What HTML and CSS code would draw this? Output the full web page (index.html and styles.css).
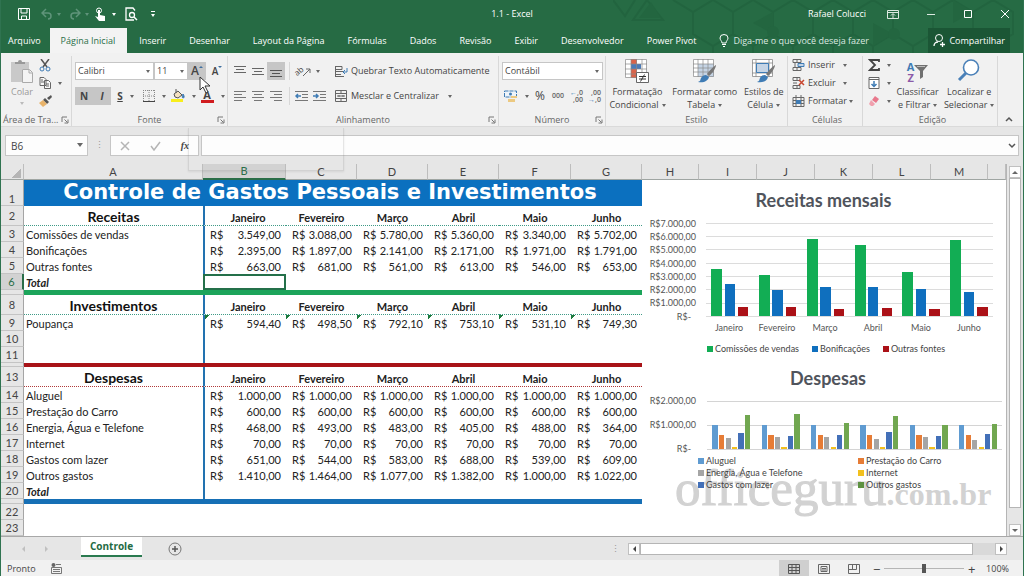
FILE: index.html
```html
<!DOCTYPE html>
<html lang="pt-BR">
<head>
<meta charset="utf-8">
<title>1.1 - Excel</title>
<link rel="stylesheet" href="styles.css">
</head>
<body>
<svg class="defs" aria-hidden="true">
  <symbol id="launch" viewBox="0 0 8 8"><path d="M1 6V1h5M3.500 3.500l3 3M7 3.500V7H3.500" fill="none" stroke="#777"/></symbol>
  <symbol id="brush" viewBox="0 0 20 18"><path d="M19 0c-2 1-7 6-9 9l2 2c3-2 7-8 7-11z" fill="#777"/><path d="M9 10l3 2c-1 4-5 6-11 5 3-1 2-2 3-4s3-3 5-3z" fill="#3f7cb5"/></symbol>
</svg>
<div class="window">
  <header class="top">
    <svg class="pattern" viewBox="0 0 410 53" preserveAspectRatio="xMaxYMin slice" aria-hidden="true">
      <g fill="none" stroke="#1d5a38" stroke-width="2">
        <path d="M0 0l12 16 10-16M20 20l14-20 16 20zM60 0l20 12 20-12M80 12v22l20 12 20-12V12L100 0M120 12l20-12 20 12v22l-20 12-20-12M160 12l20-12 20 12v22l-20 12-20-12M200 12l20-12 20 12v22l-20 12-20-12M240 12l20-12 20 12v22l-20 12-20-12M280 12l20-12 20 12v22l-20 12-20-12M320 12l20-12 20 12v22l-20 12-20-12M360 12l20-12 20 12v22l-20 12-20-12M100 46v10M140 46v10M180 46v10M220 46v10M260 46v10M300 46v10M340 46v10"/>
      </g>
      <g fill="#1f5f3b"><path d="M26 18l12-16 10 16zM140 23l20-11v22zM260 23l20 11-20 12zM340 0l20 12-20 11z"/><circle cx="160" cy="32" r="6"/><circle cx="281" cy="34" r="6"/></g>
    </svg>
    <div class="titlebar">
      <div class="quick">
        <button class="q" aria-label="Salvar"><svg width="12" height="12"><path d="M.5.5h11v11H.5zM3 1v4h6V1M3.500 11V8h5v3" fill="none" stroke="#fff"/></svg></button>
        <button class="q dim" aria-label="Desfazer"><svg width="12" height="12"><path d="M5 1L1 5l4 4M1 5h6c4 0 4 6 0 6" fill="none" stroke="#5f947a" stroke-width="1.500"/></svg><i class="caret"></i></button>
        <button class="q dim" aria-label="Refazer"><svg width="12" height="12"><path d="M7 1l4 4-4 4M11 5H5C1 5 1 11 5 11" fill="none" stroke="#5f947a" stroke-width="1.500"/></svg><i class="caret"></i></button>
        <button class="q touch" aria-label="Modo de toque"><svg width="12" height="14"><circle cx="4" cy="3.500" r="2.500" fill="none" stroke="#fff"/><path d="M3 3h2v5l5 1v5H4L0 9l3 1z" fill="#fff"/></svg><i class="caret"></i></button>
        <button class="q" aria-label="Visualizar impressão"><svg width="13" height="14"><path d="M10 3.500L8 1H1v12h8" fill="none" stroke="#fff" stroke-width="1.300"/><circle cx="7" cy="8" r="2.500" fill="none" stroke="#fff" stroke-width="1.300"/><path d="M9 10l3 3" stroke="#fff" stroke-width="1.500"/></svg></button>
        <button class="q" aria-label="Personalizar"><span class="custom"><i class="caret"></i></span></button>
      </div>
      <div class="doc">1.1 - Excel</div>
      <div class="sys">
        <span>Rafael Colucci</span>
        <button aria-label="Opções da faixa"><svg width="12" height="10"><path d="M.5 1.500h11v8H.5zM.5 3.500h11M6 9V5M4 6.500l2-2 2 2" fill="none" stroke="#dce9e1"/></svg></button>
        <button aria-label="Minimizar"><svg width="10" height="10"><path d="M1 5.500h8" stroke="#dce9e1"/></svg></button>
        <button aria-label="Maximizar"><svg width="10" height="10"><path d="M1.500 1.500h7v7h-7z" fill="none" stroke="#fff"/></svg></button>
        <button aria-label="Fechar"><svg width="10" height="10"><path d="M1 1l8 8M9 1L1 9" stroke="#fff"/></svg></button>
      </div>
    </div>
    <nav class="tabs">
      <button>Arquivo</button><button class="on">Página Inicial</button><button>Inserir</button><button>Desenhar</button><button>Layout da Página</button><button>Fórmulas</button><button>Dados</button><button>Revisão</button><button>Exibir</button><button>Desenvolvedor</button><button>Power Pivot</button>
      <button class="tell"><svg width="10" height="13"><path d="M3 9C3 7 1 6 1 4a4 3.500 0 0 1 8 0c0 2-2 3-2 5zM3 10.500h4M4 12.500h2" fill="none" stroke="#fff"/></svg>Diga-me o que você deseja fazer</button>
      <button class="share"><svg width="12" height="13"><circle cx="6" cy="4" r="3.500" fill="none" stroke="#fff"/><path d="M1 12c0-3 2-4 4-4M7 10.500h5M9.500 8v5" fill="none" stroke="#fff" stroke-width="1.300"/></svg>Compartilhar</button>
    </nav>
  </header>

  <section class="ribbon">
    <div class="group g-clip">
      <div class="body">
        <button class="paste"><svg width="25" height="25"><path d="M1 3h18v7h-7v13H1z" fill="#c9c9c9"/><path d="M5 5V3h3a2 2 0 0 1 4 0h3v2z" fill="#999"/><path d="M12.500 10.500h7l3 3v10h-10zM19 11v3h3" fill="#f4f4f4" stroke="#aaa"/></svg><span>Colar</span><i class="caret"></i></button>
        <div class="stack">
          <button aria-label="Recortar"><svg width="12" height="13"><path d="M2 0l6 8M10 0L4 8" stroke="#555" stroke-width="1.500"/><circle cx="3" cy="10" r="2" fill="none" stroke="#3f7cb5"/><circle cx="9" cy="10" r="2" fill="none" stroke="#3f7cb5"/></svg></button>
          <button aria-label="Copiar"><svg width="13" height="12"><path d="M1 .5h4l2 2v6H1zM5.500 3.500h4l2 2v6h-6zM2 3h2M2 5h3M7 7h3M7 9h3" fill="#f8f8f8" stroke="#666"/></svg><i class="caret"></i></button>
          <button aria-label="Pincel de formatação"><svg width="13" height="12"><path d="M8 3l4-3 1 2-3 3z" fill="#555"/><path d="M6 3l4 4-2 2-4-4z" fill="#555"/><path d="M4 5l4 4-4 3-4-4z" fill="#e8b36a"/></svg></button>
        </div>
      </div>
      <div class="name">Área de Tra...<svg width="8" height="8"><use href="#launch"/></svg></div>
    </div>

    <div class="group g-font">
      <div class="rows">
        <div class="row">
          <span class="combo c1"><select aria-label="Fonte"><option>Calibri</option></select></span>
          <span class="combo c2"><select aria-label="Tamanho"><option>11</option></select></span>
          <button class="b18 sel" aria-label="Aumentar fonte"><span class="biga">A</span><i class="up"></i></button>
          <button class="b18" aria-label="Diminuir fonte"><span class="smalla">A</span><i class="dn"></i></button>
        </div>
        <div class="row">
          <button class="b18 sel"><b>N</b></button>
          <button class="b18 sel"><em>I</em></button>
          <button class="b28"><u>S</u><i class="caret"></i></button>
          <button class="b28" aria-label="Bordas"><svg width="12" height="12"><path d="M.5 0v11M11.500 0v11M0 .5h12M6 0v11M0 6h12" stroke="#888" stroke-dasharray="1 1"/><path d="M0 11.500h12" stroke="#444"/></svg><i class="caret"></i></button>
          <button class="b28" aria-label="Preenchimento"><svg width="14" height="14"><path d="M3 5l4-3 4 4-4 3-3-1zM5 4V0" fill="#f4e0c0" stroke="#555"/><path d="M12 5c2 3 1 4 0 4s-1-2 0-4z" fill="#3f7cb5" stroke="#3f7cb5"/><path d="M0 10h12v3H0z" fill="#f8ee1c"/></svg><i class="caret"></i></button>
          <button class="b28" aria-label="Cor da fonte"><span class="fcolor">A</span><i class="caret"></i></button>
        </div>
      </div>
      <div class="name">Fonte<svg width="8" height="8"><use href="#launch"/></svg></div>
    </div>

    <div class="group g-align">
      <div class="rows">
        <div class="row">
          <button class="b18" aria-label="Alinhar acima"><svg width="12" height="12"><path d="M0 1.500h12M2 4.500h8M0 7.500h12" stroke="#666"/></svg></button>
          <button class="b18" aria-label="Alinhar no meio"><svg width="12" height="12"><path d="M0 3.500h12M2 6.500h8M0 9.500h12" stroke="#666"/></svg></button>
          <button class="b18 sel" aria-label="Alinhar abaixo"><svg width="12" height="12"><path d="M0 5.500h12M2 8.500h8M0 11.500h12" stroke="#555"/></svg></button>
          <span class="split"></span>
          <button class="b28 wide" aria-label="Orientação"><span class="orient">ab</span><svg width="8" height="12"><path d="M0 11l7-7M3 4h4v4" fill="none" stroke="#666"/></svg><i class="caret"></i></button>
          <button class="txt"><svg width="13" height="13"><path d="M.5 1v11M1 1.500h6v3H1M1 6.500h8M1 9.500h5M1 11.500h8" fill="none" stroke="#666"/><path d="M12 3v4H8M10 5L8 7l2 2" fill="none" stroke="#3f7cb5"/></svg>Quebrar Texto Automaticamente</button>
        </div>
        <div class="row">
          <button class="b18" aria-label="Esquerda"><svg width="12" height="12"><path d="M0 1.500h12M0 4.500h8M0 7.500h12M0 10.500h8" stroke="#777"/></svg></button>
          <button class="b18" aria-label="Centro"><svg width="12" height="12"><path d="M0 1.500h12M2 4.500h8M0 7.500h12M2 10.500h8" stroke="#777"/></svg></button>
          <button class="b18" aria-label="Direita"><svg width="12" height="12"><path d="M0 1.500h12M4 4.500h8M0 7.500h12M4 10.500h8" stroke="#777"/></svg></button>
          <span class="split"></span>
          <button class="b18" aria-label="Diminuir recuo"><svg width="14" height="12"><path d="M0 1.500h13M7 4.500h6M7 7.500h6M0 10.500h13" stroke="#777"/><path d="M6 6H1M3 4L1 6l2 2" fill="none" stroke="#3f7cb5" stroke-width="1.500"/></svg></button>
          <button class="b18" aria-label="Aumentar recuo"><svg width="14" height="12"><path d="M0 1.500h13M7 4.500h6M7 7.500h6M0 10.500h13" stroke="#777"/><path d="M0 6h5M3 4l2 2-2 2" fill="none" stroke="#3f7cb5" stroke-width="1.500"/></svg></button>
          <button class="txt merge"><svg width="13" height="13"><path d="M.5.5h11v11H.5zM0 3.500h12M0 8.500h12M6 0v3M6 9v3M2 6h8M4 5v2M8 5v2" fill="none" stroke="#666"/></svg>Mesclar e Centralizar<i class="caret"></i></button>
        </div>
      </div>
      <div class="name">Alinhamento<svg width="8" height="8"><use href="#launch"/></svg></div>
    </div>

    <div class="group g-num">
      <div class="rows">
        <div class="row"><span class="combo c3"><select aria-label="Formato de número"><option>Contábil</option></select></span></div>
        <div class="row">
          <button class="b28" aria-label="Formato contábil"><svg width="14" height="13"><path d="M.5 1h12v6H.5z" fill="#eef4fa" stroke="#3f7cb5" stroke-dasharray="4 1"/><circle cx="6.500" cy="4" r="1.500" fill="#3f7cb5"/><path d="M7 6h6v2H7zM4 9h7v3H4z" fill="#ecc981"/></svg><i class="caret"></i></button>
          <button class="b18 pct">%</button>
          <button class="b18 zeros">000</button>
          <button class="b18 dec" aria-label="Aumentar casas"><span><i>←</i>,0</span><span>,00</span></button>
          <button class="b18 dec" aria-label="Diminuir casas"><span>,00</span><span><i>→</i>,0</span></button>
        </div>
      </div>
      <div class="name">Número<svg width="8" height="8"><use href="#launch"/></svg></div>
    </div>

    <div class="group g-style">
      <div class="body">
        <button class="big"><svg width="24" height="25"><path d="M.5.5h21v18H.5z" fill="#fff"/><path d="M6 0h6v5H6zM6 15h5v4H6z" fill="#d9634a"/><path d="M6 5h10v5H6z" fill="#4a7ab8"/><path d="M6 10h6v5H6z" fill="#d9634a"/><path d="M.5.5h21v18H.5zM6 0v19M11.500 0v19M17 0v19M0 5h22M0 10h22M0 15h22" fill="none" stroke="#8a8a8a" stroke-width=".7"/><path d="M11.500 13.500h12v10h-12z" fill="#fff" stroke="#666"/><path d="M14 17.500h7M14 20h7M19.500 15.500l-4 7" stroke="#333"/></svg><span>Formatação<br>Condicional<i class="caret"></i></span></button>
        <button class="big"><svg width="24" height="25"><path d="M.5.500h20v17H.5z" fill="#fff"/><path d="M5 5h16v13H5z" fill="#c5d4e5"/><path d="M.5.5h20v17H.5zM5 0v18M10 0v18M15 0v18M0 5h21M0 9h21M0 13h21" fill="none" stroke="#8a8a8a" stroke-width=".7"/><use href="#brush" x="4" y="6" width="20" height="18"/></svg><span>Formatar como<br>Tabela<i class="caret"></i></span></button>
        <button class="big"><svg width="24" height="25"><path d="M.5.5h20v17H.5zM4 0v18M17 0v18M0 4h21M0 14h21" fill="#fff" stroke="#8a8a8a" stroke-width=".8"/><path d="M4.500 4.500h12v9h-12z" fill="#c5d4e5" stroke="#3f7cb5"/><use href="#brush" x="4" y="6" width="20" height="18"/></svg><span>Estilos de<br>Célula<i class="caret"></i></span></button>
      </div>
      <div class="name">Estilo</div>
    </div>

    <div class="group g-cells">
      <div class="stack">
        <button><svg width="13" height="13"><path d="M1 .5h8v3H1zM5 .5v3M1 8.500h8v3H1zM5 8.500v3M3 4v4" fill="none" stroke="#666"/><path d="M6 4.500h6v3H6z" fill="#c5d4e5" stroke="#3f7cb5"/></svg><span>Inserir</span><i class="caret"></i></button>
        <button><svg width="13" height="13"><path d="M1 .5h7v3H1zM5 .5v3M1 8.500h7v3H1zM5 8.500v3M1 6h4" fill="none" stroke="#666"/><path d="M7 3l5 5M12 3L7 8" stroke="#c8452f" stroke-width="1.500"/></svg><span>Excluir</span><i class="caret"></i></button>
        <button><svg width="13" height="13"><path d="M1 2.500h11v9H1zM1 5.500h11M1 8.500h11M4 0v12M9 0v12" fill="none" stroke="#666"/><path d="M4 5h5v4H4z" fill="#3f7cb5"/></svg><span>Formatar</span><i class="caret"></i></button>
      </div>
      <div class="name">Células</div>
    </div>

    <div class="group g-edit">
      <div class="body">
        <div class="stack">
          <button aria-label="Soma"><svg width="13" height="12"><path d="M11 3V1H2l5 5-5 5h9V9" fill="none" stroke="#444" stroke-width="1.800"/></svg><i class="caret"></i></button>
          <button aria-label="Preencher"><svg width="13" height="12"><path d="M1 .5h10v11H1zM1 2.500h10" fill="#fff" stroke="#666"/><path d="M6 4v5M3.500 7L6 9.500 8.500 7" fill="none" stroke="#3f7cb5" stroke-width="1.500"/></svg><i class="caret"></i></button>
          <button aria-label="Limpar"><svg width="13" height="12"><path d="M7 1l4 3-3 4-4-3z" fill="#e8788c"/><path d="M3 5l4 4-2 2H3L1 9z" fill="#f0a0ae"/></svg><i class="caret"></i></button>
        </div>
        <button class="big"><span class="az"><span class="letters"><span>A</span><span>Z</span></span><svg width="14" height="14"><path d="M0 0h14L9 6v6l-3 2V6z" fill="#707070"/><path d="M3 1.500h8" stroke="#bbb"/></svg></span><span>Classificar<br>e Filtrar<i class="caret"></i></span></button>
        <button class="big"><svg width="24" height="25"><circle cx="14" cy="8.500" r="7.500" fill="#fff" stroke="#4a80b8" stroke-width="1.600"/><path d="M9 14l-7 7" stroke="#4a80b8" stroke-width="3"/></svg><span>Localizar e<br>Selecionar<i class="caret"></i></span></button>
      </div>
      <div class="name">Edição</div>
    </div>
    <button class="collapse" aria-label="Recolher"><svg width="8" height="6"><path d="M1 5l3-3 3 3" fill="none" stroke="#555" stroke-width="1.500"/></svg></button>
    <svg class="cursor" width="13" height="19"><path d="M1 1v13l3-3 3 6 2-1-3-6h5z" fill="#fff" stroke="#333"/></svg>
  </section>

  <section class="formula">
    <span class="combo namebox"><input type="text" value="B6" aria-label="Caixa de nome"></span>
    <span class="dots">⋮</span>
    <div class="fx">
      <button aria-label="Cancelar"><svg width="10" height="10"><path d="M1 1l8 8M9 1L1 9" stroke="#b5b5b5" stroke-width="1.500"/></svg></button>
      <button aria-label="Inserir"><svg width="11" height="10"><path d="M1 5l3 4 6-8" fill="none" stroke="#b5b5b5" stroke-width="1.500"/></svg></button>
      <button class="fn">fx</button>
    </div>
    <div class="finput"><input type="text" aria-label="Fórmula"><svg width="8" height="6"><path d="M1 1l3 3 3-3" fill="none" stroke="#555" stroke-width="1.500"/></svg></div>
    <div class="ghost"></div>
  </section>

  <main class="work">
    <table class="sheet">
      <colgroup><col class="w-rh"><col class="w-a"><col class="w-b"><col class="w-n"><col class="w-n"><col class="w-n"><col class="w-f"><col class="w-n"><col class="w-h"><col class="w-i"><col class="w-i"><col class="w-i"><col class="w-i"><col class="w-h"><col></colgroup>
      <thead>
        <tr><th class="corner"></th><th>A</th><th class="active">B</th><th>C</th><th>D</th><th>E</th><th>F</th><th>G</th><th>H</th><th>I</th><th>J</th><th>K</th><th>L</th><th>M</th><th></th></tr>
      </thead>
      <tbody>
        <tr class="r1"><th>1</th><td colspan="7" class="banner">Controle de Gastos Pessoais e Investimentos</td>
          <td colspan="7" rowspan="23" class="charts">
            <div class="canvas">
            <div class="mark"><span>officeguru</span><small>.com.br</small></div>
            <figure>
              <h2 class="h-one">Receitas mensais</h2>
              <svg class="plot" viewBox="0 0 364 120">
                <path d="M64 7.500h287M64 20.500h287M64 33.500h287M64 47.500h287M64 60.500h287M64 73.500h287M64 87.500h287M64 100.500h287" stroke="#dcdcdc"/>
                <g class="axis" text-anchor="end"><text x="54" y="11">R$7.000,00</text><text x="54" y="24">R$6.000,00</text><text x="54" y="37">R$5.000,00</text><text x="54" y="51">R$4.000,00</text><text x="54" y="64">R$3.000,00</text><text x="54" y="77">R$2.000,00</text><text x="54" y="90">R$1.000,00</text><text x="49" y="104">R$-</text></g>
                <path fill="#12ad54" d="M69 100V53h11v47zM117 100V59h11v41zM165 100V23h11v77zM213 100V29h11v71zM260 100V56h11v44zM308 100V24h11v76z"/>
                <path fill="#0f6fbe" d="M83 100V68h10v32zM130 100V74h11v26zM178 100V71h11v29zM226 100V71h10v29zM274 100V73h10v27zM322 100V76h10v24z"/>
                <path fill="#ab1117" d="M96 100v-9h10v9zM144 100v-9h10v9zM192 100v-7h10v7zM240 100v-8h10v8zM287 100v-7h11v7zM335 100v-9h11v9z"/>
                <g class="axis" text-anchor="middle"><text x="87" y="115">Janeiro</text><text x="135" y="115">Fevereiro</text><text x="183" y="115">Março</text><text x="231" y="115">Abril</text><text x="279" y="115">Maio</text><text x="327" y="115">Junho</text></g>
              </svg>
              <ul class="legend one"><li class="k1">Comissões de vendas</li><li class="k2">Bonificações</li><li class="k3">Outras fontes</li></ul>
            </figure>
            <figure>
              <h2 class="h-two">Despesas</h2>
              <svg class="plot" viewBox="0 0 364 60">
                <path d="M65 6.500h295M65 30.500h295M65 54.500h295" stroke="#d4d4d4"/>
                <g class="axis" text-anchor="end"><text x="54" y="9">R$2.000,00</text><text x="54" y="33">R$1.000,00</text><text x="49" y="57">R$-</text></g>
                <path fill="#5f9bd1" d="M70 54V30h6v24zM120 54V30h5v24zM169 54V30h5v24zM218 54V30h6v24zM268 54V30h5v24zM317 54V30h5v24z"/>
                <path fill="#e67c36" d="M77 54V40h5v14zM126 54V40h6v14zM176 54V40h5v14zM225 54V40h5v14zM274 54V40h6v14zM324 54V40h5v14z"/>
                <path fill="#a5a5a5" d="M84 54V43h5v11zM133 54V42h5v12zM182 54V42h5v12zM232 54V44h5v10zM281 54V42h5v12zM330 54V45h5v9z"/>
                <path fill="#f2c01e" d="M90 54v-2h5v2zM139 54v-2h6v2zM189 54v-2h5v2zM238 54v-2h5v2zM287 54v-2h6v2zM337 54v-2h5v2z"/>
                <path fill="#4370b8" d="M96 54V38h6v16zM146 54V41h5v13zM195 54V40h5v14zM244 54V37h6v17zM294 54V41h5v13zM343 54V39h5v15z"/>
                <path fill="#71a750" d="M103 54V20h5v34zM152 54V19h6v35zM202 54V28h5v26zM251 54V21h5v33zM300 54V30h6v24zM350 54V29h5v25z"/>
              </svg>
              <ul class="legend two"><li class="d1">Aluguel</li><li class="d2">Prestação do Carro</li><li class="d3">Energia, Água e Telefone</li><li class="d4">Internet</li><li class="d5">Gastos com lazer</li><li class="d6">Outros gastos</li></ul>
            </figure>
            </div>
          </td></tr>
        <tr class="head"><th>2</th><td class="sec">Receitas</td><td>Janeiro</td><td>Fevereiro</td><td>Março</td><td>Abril</td><td>Maio</td><td>Junho</td></tr>
        <tr><th>3</th><td>Comissões de vendas</td><td><i>R$</i>3.549,00</td><td><i>R$</i>3.088,00</td><td><i>R$</i>5.780,00</td><td><i>R$</i>5.360,00</td><td><i>R$</i>3.340,00</td><td><i>R$</i>5.702,00</td></tr>
        <tr><th>4</th><td>Bonificações</td><td><i>R$</i>2.395,00</td><td><i>R$</i>1.897,00</td><td><i>R$</i>2.141,00</td><td><i>R$</i>2.171,00</td><td><i>R$</i>1.971,00</td><td><i>R$</i>1.791,00</td></tr>
        <tr><th>5</th><td>Outras fontes</td><td><i>R$</i>663,00</td><td><i>R$</i>681,00</td><td><i>R$</i>561,00</td><td><i>R$</i>613,00</td><td><i>R$</i>546,00</td><td><i>R$</i>653,00</td></tr>
        <tr class="total current"><th>6</th><td>Total</td><td class="cell-on"></td><td></td><td></td><td></td><td></td><td></td></tr>
        <tr class="bar green"><th></th><td colspan="7"></td></tr>
        <tr class="head"><th>8</th><td class="sec">Investimentos</td><td>Janeiro</td><td>Fevereiro</td><td>Março</td><td>Abril</td><td>Maio</td><td>Junho</td></tr>
        <tr class="flag"><th>9</th><td>Poupança</td><td><i>R$</i>594,40</td><td><i>R$</i>498,50</td><td><i>R$</i>792,10</td><td><i>R$</i>753,10</td><td><i>R$</i>531,10</td><td><i>R$</i>749,30</td></tr>
        <tr><th>10</th><td></td><td></td><td></td><td></td><td></td><td></td><td></td></tr>
        <tr><th>11</th><td></td><td></td><td></td><td></td><td></td><td></td><td></td></tr>
        <tr class="bar red"><th></th><td colspan="7"></td></tr>
        <tr class="head warm"><th>13</th><td class="sec">Despesas</td><td>Janeiro</td><td>Fevereiro</td><td>Março</td><td>Abril</td><td>Maio</td><td>Junho</td></tr>
        <tr><th>14</th><td>Aluguel</td><td><i>R$</i>1.000,00</td><td><i>R$</i>1.000,00</td><td><i>R$</i>1.000,00</td><td><i>R$</i>1.000,00</td><td><i>R$</i>1.000,00</td><td><i>R$</i>1.000,00</td></tr>
        <tr><th>15</th><td>Prestação do Carro</td><td><i>R$</i>600,00</td><td><i>R$</i>600,00</td><td><i>R$</i>600,00</td><td><i>R$</i>600,00</td><td><i>R$</i>600,00</td><td><i>R$</i>600,00</td></tr>
        <tr><th>16</th><td>Energia, Água e Telefone</td><td><i>R$</i>468,00</td><td><i>R$</i>493,00</td><td><i>R$</i>483,00</td><td><i>R$</i>405,00</td><td><i>R$</i>488,00</td><td><i>R$</i>364,00</td></tr>
        <tr><th>17</th><td>Internet</td><td><i>R$</i>70,00</td><td><i>R$</i>70,00</td><td><i>R$</i>70,00</td><td><i>R$</i>70,00</td><td><i>R$</i>70,00</td><td><i>R$</i>70,00</td></tr>
        <tr><th>18</th><td>Gastos com lazer</td><td><i>R$</i>651,00</td><td><i>R$</i>544,00</td><td><i>R$</i>583,00</td><td><i>R$</i>688,00</td><td><i>R$</i>539,00</td><td><i>R$</i>609,00</td></tr>
        <tr><th>19</th><td>Outros gastos</td><td><i>R$</i>1.410,00</td><td><i>R$</i>1.464,00</td><td><i>R$</i>1.077,00</td><td><i>R$</i>1.382,00</td><td><i>R$</i>1.000,00</td><td><i>R$</i>1.022,00</td></tr>
        <tr class="total"><th>20</th><td>Total</td><td></td><td></td><td></td><td></td><td></td><td></td></tr>
        <tr class="bar blue"><th></th><td colspan="7"></td></tr>
        <tr class="plain"><th>22</th><td colspan="7"></td></tr>
        <tr class="plain"><th>23</th><td colspan="7"></td></tr>
      </tbody>
    </table>
    <div class="vscroll"><button aria-label="Para cima"><i class="tri-u"></i></button><div class="track"></div><button aria-label="Para baixo"><i class="tri-d"></i></button></div>
  </main>

  <section class="sheetbar">
    <div class="navs"><i class="tri-l"></i><i class="tri-r"></i></div>
    <button class="stab">Controle</button>
    <button class="add" aria-label="Nova planilha"><svg width="14" height="14"><circle cx="7" cy="7" r="6" fill="none" stroke="#777"/><path d="M4 7h6M7 4v6" stroke="#555" stroke-width="1.500"/></svg></button>
    <span class="dots">⋮</span>
    <div class="hscroll"><button aria-label="Esquerda"><i class="tri-l dark"></i></button><div class="thumb"></div><button aria-label="Direita"><i class="tri-r dark"></i></button></div>
  </section>

  <footer class="status">
    <span class="ready">Pronto</span>
    <svg width="11" height="11"><circle cx="2.500" cy="2" r="2" fill="#666"/><path d="M5 1.500h5M.5 4.500h10v6H.5zM2 6.500h7M2 8.500h7" fill="none" stroke="#777"/></svg>
    <div class="views">
      <button class="von" aria-label="Normal"><svg width="12" height="10"><path d="M.5.5h11v9H.5zM4 0v10M8 0v10M0 3.500h12M0 6.500h12" fill="none" stroke="#555"/></svg></button>
      <button aria-label="Layout da página"><svg width="12" height="10"><path d="M.5.5h11v9H.5zM3 2.500h6v5H3zM4 4.500h4M4 6h4" fill="none" stroke="#666"/></svg></button>
      <button aria-label="Quebras de página"><svg width="12" height="10"><path d="M.5.5h11v9H.5zM4.500 0v5.500M8.500 0v5.500H1" fill="none" stroke="#666"/></svg></button>
    </div>
    <div class="zoom"><button aria-label="Menos zoom">−</button><input type="range" min="0" max="100" value="50" aria-label="Zoom"><button aria-label="Mais zoom">+</button></div>
    <span class="pc">100%</span>
  </footer>
</div>
</body>
</html>
```
FILE: styles.css
```css
* { box-sizing: border-box; }
body { margin: 0; background: #e6e6e6; font: 9px/12px "Open Sans", "Noto Sans", sans-serif; color: #444; }
button { font: inherit; color: inherit; background: none; border: 0; padding: 0; margin: 0; display: flex; align-items: center; white-space: nowrap; }
svg { display: block; flex: none; }
i { font-style: normal; }
.defs { position: absolute; width: 0; height: 0; }
.window { min-height: 100vh; display: flex; flex-direction: column; border: solid #2f7350; border-width: 0 1px 1px; }

.caret { flex: none; border: solid transparent; border-width: 3px 2px 0; border-top-color: #666; width: 0; height: 0; }

/* title bar and tabs */
.top { background: #266b44; color: #fff; position: relative; }
.pattern { position: absolute; right: 0; top: 0; width: 410px; height: 53px; opacity: .4; }
.titlebar { height: 28px; display: grid; grid-template-columns: 1fr auto 1fr; align-items: center; position: relative; }
.quick { display: flex; align-items: center; padding-left: 17px; gap: 11px; }
.q { gap: 5px; }
.q .caret { border-top-color: #fff; }
.q.dim .caret { border-top-color: #5f947a; }
.q.dim { gap: 4px; }
.q.dim + .dim { margin-left: -3px; }
.touch { margin-left: -5px; margin-right: -2px; }
.custom { border-top: 1px solid #fff; padding-top: 2px; margin-left: 2px; }
.custom .caret { display: block; }
.sys { display: flex; align-items: center; justify-content: flex-end; padding-right: 13px; gap: 27px; }
.sys span { margin-right: -6px; }
.tabs { height: 25px; display: flex; gap: 1px; position: relative; padding-right: 13px; }
.tabs button { padding: 0 11px; }
.tabs button:first-child { padding: 0 8px 0 7px; }
.tabs .on { background: #f3f3f3; color: #2a6e48; padding: 0 12px 0 11px; }
.tabs .tell { color: #dce9e1; gap: 4px; }
.tabs .share { margin-left: auto; background: #1b5635; padding: 0 5px; gap: 4px; }

/* ribbon */
.ribbon { display: flex; background: #f1f1f1; height: 74px; border-bottom: 1px solid #dadada; position: relative; padding-top: 3px; }
.group { border-right: 1px solid #d8d8d8; display: flex; flex-direction: column; height: 70px; flex: none; }
.group .name { margin-top: auto; height: 12px; text-align: center; color: #666; position: relative; white-space: nowrap; }
.group .name svg { position: absolute; right: 2px; top: 2px; }
.g-clip { width: 71px; }
.g-clip .name { text-align: left; padding-left: 2px; }
.g-font { width: 156px; }
.g-align { width: 271px; }
.g-num { width: 107px; }
.g-style { width: 182px; }
.g-cells { width: 75px; padding-left: 4px; }
.g-edit { width: 135px; padding-left: 5px; }
.body { display: flex; }
.rows { display: flex; flex-direction: column; gap: 7px; padding: 6px 0 0 3px; }
.row { display: flex; align-items: center; height: 18px; }
.paste { flex-direction: column; justify-content: flex-start; gap: 2px; width: 38px; color: #999; padding: 3px 0 0 4px; }
.paste .caret { border-top-color: #bbb; margin-top: 2px; }
.stack { display: flex; flex-direction: column; }
.stack button { height: 18px; gap: 6px; }
.stack button svg { width: 13px; }
.g-cells .stack span { width: 32px; text-align: left; margin-left: -3px; }
.g-cells .stack .caret { margin-left: -3px; }
.g-cells .stack button:nth-child(3) span { width: 40px; }
.g-cells .stack button:nth-child(3) .caret { margin-left: -5px; }
.combo { position: relative; display: block; }
.combo::after { content: ""; position: absolute; right: 4px; top: 8px; border: solid transparent; border-width: 3px 2px 0; border-top-color: #666; pointer-events: none; }
.combo select, .combo input { appearance: none; width: 100%; height: 18px; border: 1px solid #c6c6c6; border-radius: 0; background: #fff; padding: 0 2px; margin: 0; font: inherit; color: #444; display: block; }
.c1 { width: 79px; }
.c2 { width: 34px; }
.c3 { width: 101px; }
.b18 { width: 18px; height: 18px; justify-content: center; }
.b28 { width: 29px; height: 18px; justify-content: center; gap: 7px; }
.sel { background: #c6c6c6; }
.b18 b, .b18 em, .b28 u { font-weight: 700; font-size: 10px; }
.biga { font-size: 12px; font-weight: 600; }
.smalla { font-size: 10px; font-weight: 600; margin-left: 4px; }
.up, .dn { align-self: flex-start; margin-top: 4px; border: 2px solid transparent; }
.up { border-top-width: 0; border-bottom-color: #3f6f9f; }
.dn { border-bottom-width: 0; border-top-color: #3f6f9f; }
.fcolor { width: 13px; border-bottom: 3px solid #d01c1f; font-size: 11px; line-height: 11px; font-weight: 700; text-align: center; }
.split { width: 1px; height: 18px; background: #d8d8d8; margin: 0 3px 0 4px; }
.wide { width: 28px; gap: 0; margin-right: 14px; }
.orient { font-size: 8px; transform: rotate(-40deg); }
.wide .caret { margin-left: 5px; }
.txt { gap: 3px; height: 18px; }
.merge { margin-left: 6px; }
.merge .caret { margin-left: 6px; }
.pct { font-size: 12px; }
.zeros { font: 600 7px/12px "Open Sans", sans-serif; color: #666; }
.dec { flex-direction: column; align-items: flex-end; justify-content: center; font: 600 7px/7px "Open Sans", sans-serif; color: #666; padding-right: 2px; }
.dec i { color: #3f7cb5; }
.big { flex-direction: column; justify-content: flex-start; text-align: center; gap: 1px; padding-top: 3px; flex: 1 1 auto; line-height: 13px; }
.big .caret { display: inline-block; vertical-align: middle; margin-left: 3px; }
.az { display: flex; align-items: center; height: 25px; }
.letters { display: flex; flex-direction: column; font: 700 11px/11px "Open Sans", sans-serif; color: #3f7cb5; }
.letters span + span { color: #8b5aa8; }
.g-edit .stack { width: 26px; }
.collapse { margin: auto 10px 4px auto; }
.cursor { position: absolute; left: 198px; top: 23px; }

/* formula bar */
.formula { display: flex; align-items: flex-start; padding: 8px 4px 8px; position: relative; }
.namebox { width: 83px; }
.namebox input { padding-left: 5px; font-size: 10px; }
.namebox::after { border-width: 4px 3px 0; right: 5px; top: 8px; }
.namebox input, .fx, .finput { height: 21px; border: 1px solid #c6c6c6; background: #fdfdfd; }
.dots { width: 22px; text-align: center; color: #999; line-height: 20px; }
.fx { width: 89px; display: flex; align-items: center; justify-content: space-between; padding: 0 9px; margin-right: 2px; }
.fn { font: italic 700 10px/12px "Liberation Serif", serif; }
.finput { flex: 1; display: flex; align-items: center; padding-right: 2px; }
.finput input { flex: 1; border: 0; background: none; height: 18px; font: inherit; }
.ghost { position: absolute; left: 187px; top: 1px; width: 156px; height: 43px; border: 1px solid rgba(120,120,120,.18); border-top: 0; box-shadow: 0 1px 2px rgba(0,0,0,.08); z-index: 2; }

/* worksheet */
.work { display: flex; flex: 1; }
.sheet { flex: 1; width: 0; table-layout: fixed; border-collapse: separate; border-spacing: 0; background: #fff; font: 11px/14px Lato, "Open Sans", sans-serif; color: #222; border-right: 1px solid #b5b5b5; }
.w-rh { width: 23px; } .w-a { width: 179px; } .w-b { width: 83px; } .w-n { width: 71px; } .w-f { width: 72px; } .w-h { width: 57px; } .w-i { width: 58px; }
th, td { padding: 0; height: 16px; white-space: nowrap; overflow: hidden; }
th { background: #e6e6e6; font-weight: 400; color: #444; border-right: 1px solid #bdbdbd; border-bottom: 1px solid #c4c4c4; font-size: 11px; line-height: 13px; }
thead th { border-bottom-color: #9fa5a2; height: 16px; }
thead th.active { background: #d2d2d2; color: #2a6e48; border-bottom: 2px solid #2a6e48; line-height: 12px; }
.corner { background: linear-gradient(135deg, transparent 50%, #b5b5b5 50%) right 2px bottom 1px / 9px 9px no-repeat #e6e6e6; }
tbody th { border-right-color: #a5a5a5; }
td { text-align: right; padding: 2px 5px 0 6px; }
td i { float: left; }
tr > td:nth-child(2) { text-align: left; padding-left: 2px; }
tr > td:nth-child(3) { border-left: 2px solid #2272b0; padding-left: 5px; }
.r1 .banner { height: 26px; background: #0b70bf; color: #fff; text-align: center; padding: 0 6px 0 0; font: 700 21px/25px "DejaVu Sans", sans-serif; border-bottom: 1px solid #0b70bf; }
.r1 th { vertical-align: bottom; }
.r1 .charts { border: 0; padding: 0; text-align: left; vertical-align: top; overflow: visible; }
.head td, .head th { height: 20px; }
.head td { font-weight: 700; text-align: center; padding: 4px 0 0; border-bottom: 1px dotted #3f9a86; }
.head.warm td { border-bottom-color: #b03a3a; }
.head td.sec { font-size: 14px; line-height: 16px; text-align: center; padding: 2px 0 0; color: #111; }
.total td { font-weight: 700; font-style: italic; }
.current th { background: #d2d2d2; color: #2a6e48; border-right: 2px solid #2a6e48; }
.total td.cell-on { border: 2px solid #24704a; }
tr.bar th, tr.bar td { height: 5px; line-height: 0; padding: 0; }
.bar.green td { background: #1ca45a; }
.bar.red td { background: #a81318; }
.bar.blue td { background: #166fb5; }
tr.bar.red th, tr.bar.red td { height: 4px; }
.flag td:nth-child(n+3) { background: linear-gradient(135deg, #1c7a3c 3px, transparent 3px) no-repeat; }

/* charts */
.canvas { position: relative; font-family: Lato, "Open Sans", sans-serif; color: #555; }
figure { margin: 0; position: relative; }
h2 { margin: 0; font-size: 18px; line-height: 20px; text-align: center; color: #50545c; }
.h-one { padding: 10px 1px 6px 0; }
.h-two { padding: 13px 0 7px 8px; }
.plot { width: 100%; height: auto; }
.axis { font-size: 9px; fill: #555; }
.legend { list-style: none; margin: 0; padding: 0; font-size: 9px; line-height: 12px; color: #444; }
.legend li { display: flex; align-items: center; gap: 2px; }
.legend li::before { content: ""; width: 6px; height: 6px; background: currentColor; }
.legend.one { display: flex; gap: 13px; padding: 7px 0 0 65px; }
.legend.two { display: grid; grid-template-columns: 160px 1fr; padding-left: 56px; }
.k1::before { background: #12ad54 !important; } .k2::before { background: #0f6fbe !important; } .k3::before { background: #ab1117 !important; }
.d1::before { background: #5f9bd1 !important; } .d2::before { background: #e67c36 !important; } .d3::before { background: #a5a5a5 !important; }
.d4::before { background: #f2c01e !important; } .d5::before { background: #4370b8 !important; } .d6::before { background: #5d9140 !important; }
.mark { position: absolute; left: 33px; top: 280px; color: #d2d2d2; font: 51px/56px "Liberation Serif", serif; white-space: nowrap; -webkit-text-stroke: 1px #d2d2d2; }
.mark small { font-size: 32px; font-weight: 700; -webkit-text-stroke: 0; }

.vscroll { width: 16px; flex: none; display: flex; flex-direction: column; align-items: center; padding: 2px 0 0; background: #e6e6e6; }
.vscroll button, .hscroll button { width: 12px; height: 12px; background: #fdfdfd; border: 1px solid #c0c0c0; justify-content: center; flex: none; }
.track { width: 12px; flex: 1; background: #fff; border: 1px solid #b5b5b5; margin-bottom: 16px; }
.tri-u, .tri-d, .tri-l, .tri-r { border: 3px solid transparent; flex: none; }
.tri-u { border-top: 0; border-bottom-color: #666; }
.tri-d { border-bottom: 0; border-top-color: #666; }
.tri-l { border-left: 0; border-right-color: #c0c0c0; }
.tri-r { border-right: 0; border-left-color: #c0c0c0; }
.tri-l.dark { border-right-color: #444; }
.tri-r.dark { border-left-color: #444; }

/* sheet tabs */
.sheetbar { height: 24px; display: flex; align-items: center; border-top: 1px solid #a8a8a8; background: #e6e6e6; }
.navs { width: 80px; display: flex; gap: 20px; padding-left: 21px; }
.stab { align-self: flex-start; background: #fff; color: #246b44; font-weight: 700; font-size: 10px; height: 20px; width: 61px; justify-content: center; border-bottom: 2px solid #2a7a50; }
.add { margin-left: 26px; }
.sheetbar .dots { margin-left: auto; width: 12px; }
.hscroll { width: 379px; margin: 0 16px 0 7px; display: flex; background: #d9d9d9; justify-content: space-between; }
.thumb { flex: 1; background: #fff; border: 1px solid #b5b5b5; margin-right: 22px; }

/* status bar */
.status { height: 17px; display: flex; align-items: center; background: #f1f1f1; padding: 0 14px 0 6px; }
.ready { width: 44px; }
.views { margin-left: auto; display: flex; }
.views button { width: 30px; height: 17px; justify-content: center; }
.views .von { background: #cfcfcf; }
.zoom { display: flex; align-items: center; gap: 4px; margin-left: 4px; }
.zoom button { font-size: 13px; width: 7px; justify-content: center; }
.zoom input { appearance: none; width: 80px; height: 12px; margin: 0; background: linear-gradient(#b5b5b5, #b5b5b5) center / 100% 1px no-repeat; }
.zoom input::-webkit-slider-thumb { appearance: none; width: 4px; height: 9px; background: #555; }
.pc { margin-left: 11px; }
```
